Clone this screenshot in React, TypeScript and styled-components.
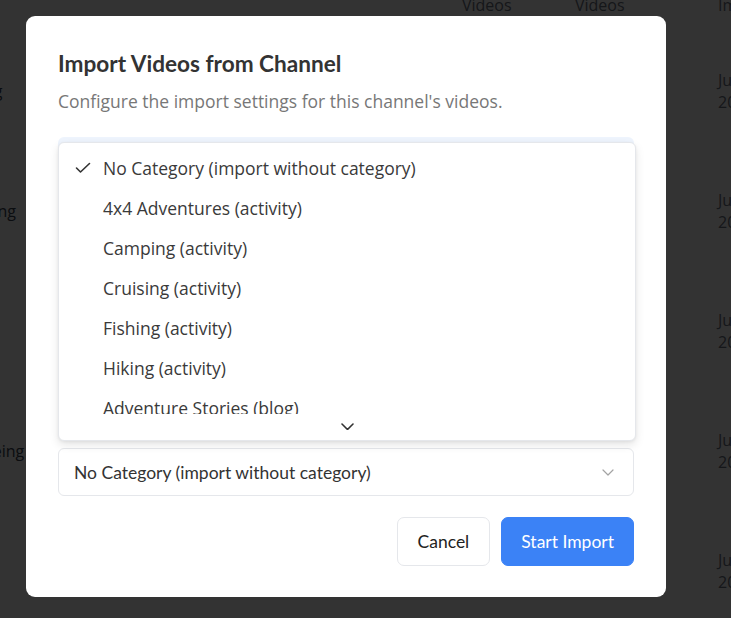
import React from 'react';
import styled, { createGlobalStyle } from 'styled-components';

const Global = createGlobalStyle`
  html, body { margin: 0; padding: 0; background: #fff; overflow: hidden; }
  body { font-family: "Open Sans", sans-serif; }
  * { box-sizing: border-box; }
`;

const Page = styled.div`
  margin-top: -21px;
  margin-left: -75px;
  width: 940px;
`;

const TableRow = styled.div<{ $head?: boolean }>`
  display: grid;
  grid-template-columns: 537px 113px 143px 152px;
  align-items: center;
  height: ${p => (p.$head ? 52 : 120)}px;
  font-size: 16px;
  line-height: 22px;
  color: ${p => (p.$head ? '#6b7280' : '#374151')};
  font-weight: ${p => (p.$head ? 500 : 400)};
`;

const Muted = styled.div`
  color: #6b7280;
  width: 60px;
`;

const Overlay = styled.div`
  position: fixed;
  inset: 0;
  background: rgba(0, 0, 0, 0.8);
`;

const Dialog = styled.div`
  position: fixed;
  left: 26px;
  top: 16px;
  width: 640px;
  background: #fff;
  border-radius: 9px;
  padding: 34px 32px 31px;
  display: flex;
  flex-direction: column;
`;

const Title = styled.h2`
  margin: 0;
  font-family: Lato, sans-serif;
  font-weight: 700;
  font-size: 22.6px;
  line-height: 28px;
  color: #333;
`;

const Description = styled.p`
  margin: 11px 0 0;
  font-family: "Open Sans", sans-serif;
  font-size: 17.5px;
  line-height: 24px;
  color: #777;
`;

const Form = styled.div`
  position: relative;
  margin-top: 24px;
  display: flex;
  flex-direction: column;
  gap: 16px;
`;

const InfoBox = styled.div`
  height: 295px;
  border-radius: 6px;
  background: #eef4fd;
  padding: 12px 16px;
  font-size: 14px;
  color: #1e40af;
`;

const Trigger = styled.button`
  height: 48px;
  width: 100%;
  display: flex;
  align-items: center;
  justify-content: space-between;
  padding: 0 19px 0 15px;
  border: 1px solid #e5e7eb;
  border-radius: 6px;
  background: #fff;
  font-family: Lato, sans-serif;
  font-size: 17.5px;
  color: #333;
  cursor: pointer;
`;

const Popover = styled.div`
  position: absolute;
  left: 0;
  right: -2px;
  top: 5px;
  height: 299px;
  background: #fff;
  border: 1px solid #e5e7eb;
  border-radius: 6px;
  box-shadow: 0 4px 10px rgba(0, 0, 0, 0.1), 0 1px 3px rgba(0, 0, 0, 0.06);
  display: flex;
  flex-direction: column;
  overflow: hidden;
`;

const Viewport = styled.div`
  height: 271px;
  overflow: hidden;
  padding: 5px 4px 0;
`;

const Item = styled.div`
  position: relative;
  height: 40px;
  display: flex;
  align-items: center;
  padding-left: 40px;
  font-family: "Open Sans", sans-serif;
  font-size: 17.5px;
  color: #3a3a3a;
  border-radius: 4px;
`;

const CheckWrap = styled.span`
  position: absolute;
  left: 12px;
  top: 14px;
  display: flex;
`;

const ScrollDown = styled.div`
  flex: 1;
  display: flex;
  align-items: center;
  justify-content: center;
  padding-bottom: 1px;
`;

const Footer = styled.div`
  margin-top: 21px;
  display: flex;
  justify-content: flex-end;
  gap: 11px;
`;

const Button = styled.button<{ $primary?: boolean }>`
  height: 49px;
  padding: 0 ${p => (p.$primary ? 19 : 20)}px;
  border-radius: 7px;
  font-family: Lato, sans-serif;
  font-size: 17.5px;
  cursor: pointer;
  border: 1px solid ${p => (p.$primary ? '#3b82f6' : '#e5e7eb')};
  background: ${p => (p.$primary ? '#3b82f6' : '#fff')};
  color: ${p => (p.$primary ? '#fff' : '#222')};
`;

const rows = [
  { name: 'Stargazing', date: ['Jun 3,', '2025'] },
  { name: 'Overlanding', date: ['Jun 3,', '2025'] },
  { name: '', date: ['Jun 3,', '2025'] },
  { name: 'Snowshoeing', date: ['Jun 3,', '2025'] },
  { name: '', date: ['Jun 3,', '2025'] },
];

const items = [
  'No Category (import without category)',
  '4x4 Adventures (activity)',
  'Camping (activity)',
  'Cruising (activity)',
  'Fishing (activity)',
  'Hiking (activity)',
  'Adventure Stories (blog)',
  'Gear Reviews (blog)',
];

const Check = () => (
  <svg width="16" height="12" viewBox="0 0 16 12" fill="none">
    <path d="M1.5 6 L5.5 10 L14.5 1.5" stroke="#333" strokeWidth="1.6" strokeLinecap="round" strokeLinejoin="round" />
  </svg>
);

const Chevron = ({ color, w, h, sw }: { color: string; w: number; h: number; sw: number }) => (
  <svg width={w + 2} height={h + 2} viewBox={`0 0 ${w + 2} ${h + 2}`} fill="none">
    <path d={`M1 1 L${w / 2 + 1} ${h + 1} L${w + 1} 1`} stroke={color} strokeWidth={sw} strokeLinecap="round" strokeLinejoin="round" />
  </svg>
);

export default function App() {
  return (
    <>
      <Global />
      <Page>
        <TableRow $head>
          <div>Name</div>
          <div>Videos</div>
          <div>Videos</div>
          <div>Imported</div>
        </TableRow>
        {rows.map((r, i) => (
          <TableRow key={i}>
            <div>{r.name}</div>
            <div>12</div>
            <div>8</div>
            <Muted>
              {r.date[0]}
              <br />
              {r.date[1]}
            </Muted>
          </TableRow>
        ))}
      </Page>
      <Overlay />
      <Dialog>
        <Title>Import Videos from Channel</Title>
        <Description>Configure the import settings for this channel's videos.</Description>
        <Form>
          <InfoBox>Videos will be imported into the selected category.</InfoBox>
          <Trigger>
            <span>No Category (import without category)</span>
            <Chevron color="#a3a3a3" w={10} h={5} sw={1.2} />
          </Trigger>
          <Popover>
            <Viewport>
              {items.map((t, i) => (
                <Item key={t}>
                  {i === 0 && (
                    <CheckWrap>
                      <Check />
                    </CheckWrap>
                  )}
                  {t}
                </Item>
              ))}
            </Viewport>
            <ScrollDown>
              <Chevron color="#333" w={11} h={5.5} sw={1.6} />
            </ScrollDown>
          </Popover>
        </Form>
        <Footer>
          <Button>Cancel</Button>
          <Button $primary>Start Import</Button>
        </Footer>
      </Dialog>
    </>
  );
}
